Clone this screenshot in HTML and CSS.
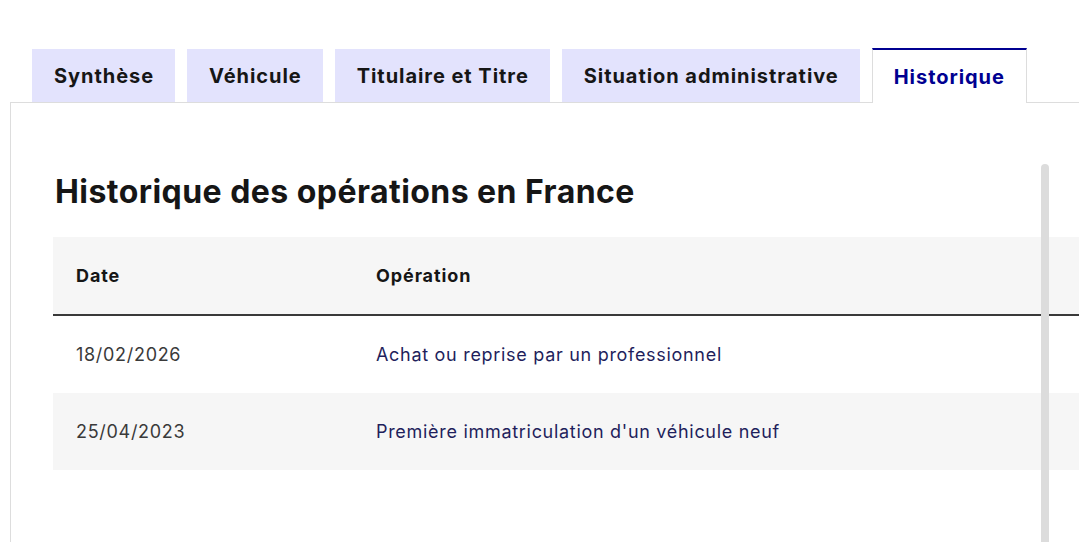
FILE: index.html
```html
<!DOCTYPE html>
<html lang="fr">
<head>
<meta charset="utf-8">
<title>Historique</title>
<link rel="stylesheet" href="styles.css">
</head>
<body>
<div class="page">
  <ul class="tabs">
    <li class="tab">Synthèse</li>
    <li class="tab">Véhicule</li>
    <li class="tab">Titulaire et Titre</li>
    <li class="tab">Situation administrative</li>
    <li class="tab tab-active">Historique</li>
  </ul>
  <section class="panel">
    <h2 class="title">Historique des opérations en France</h2>
    <table class="table">
      <thead>
        <tr><th class="col-date">Date</th><th>Opération</th></tr>
      </thead>
      <tbody>
        <tr><td class="col-date">18/02/2026</td><td class="op">Achat ou reprise par un professionnel</td></tr>
        <tr class="alt"><td class="col-date">25/04/2023</td><td class="op">Première immatriculation d'un véhicule neuf</td></tr>
      </tbody>
    </table>
    <div class="scrollbar"></div>
  </section>
</div>
</body>
</html>
```
FILE: styles.css
```css
html, body {
  margin: 0;
  padding: 0;
  background: #fff;
  overflow: hidden;
}
.page {
  width: 1079px;
  height: 542px;
  padding-top: 48px;
  box-sizing: border-box;
  font-family: Inter, "Open Sans", sans-serif;
  color: #161616;
}
.tabs {
  list-style: none;
  margin: 0;
  padding: 0 0 0 32px;
  display: flex;
  gap: 12px;
  align-items: flex-end;
  position: relative;
  z-index: 1;
}
.tab {
  height: 53px;
  box-sizing: border-box;
  display: flex;
  align-items: center;
  padding: 0 21px 0 22px;
  background: #e3e3fd;
  font-size: 20px;
  font-weight: 700;
  letter-spacing: 0.95px;
  color: #161616;
}
.tab-active {
  height: 55px;
  background: #fff;
  color: #000091;
  border-top: 2px solid #000091;
  border-left: 1px solid #ddd;
  border-right: 1px solid #ddd;
  margin-bottom: -1px;
  padding: 0 21px;
}
.panel {
  position: relative;
  margin-left: 10px;
  border-top: 1px solid #ddd;
  border-left: 1px solid #ddd;
  height: 440px;
  padding: 70px 0 0 42px;
  box-sizing: border-box;
  overflow: hidden;
}
.title {
  margin: 0 0 26px 2px;
  font-size: 32px;
  line-height: 38px;
  font-weight: 700;
  letter-spacing: 0.45px;
  color: #161616;
}
.table {
  border-collapse: collapse;
  width: 1100px;
  font-size: 18px;
}
.table th {
  background: #f6f6f6;
  text-align: left;
  font-weight: 700;
  height: 78px;
  padding: 0 23px;
  letter-spacing: 0.9px;
  border-bottom: 2px solid #3a3a3a;
  box-sizing: border-box;
}
.table td {
  height: 77px;
  padding: 0 23px;
  color: #3a3a3a;
  font-size: 18px;
  letter-spacing: 0.7px;
}
.col-date {
  width: 254px;
}
.table td.op {
  color: #1f1f5c;
}
.alt td {
  background: #f6f6f6;
}
.scrollbar {
  position: absolute;
  left: 1030px;
  top: 61px;
  width: 8px;
  height: 400px;
  border-radius: 4px;
  background: #dcdcdc;
}
```
